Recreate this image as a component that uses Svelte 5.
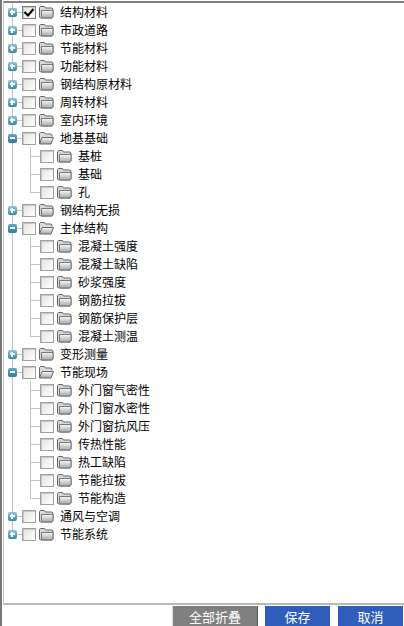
<script>
  const tree = [
    { label: "结构材料", checked: true },
    { label: "市政道路" },
    { label: "节能材料" },
    { label: "功能材料" },
    { label: "钢结构原材料" },
    { label: "周转材料" },
    { label: "室内环境" },
    { label: "地基基础", children: ["基桩", "基础", "孔"] },
    { label: "钢结构无损" },
    {
      label: "主体结构",
      children: ["混凝土强度", "混凝土缺陷", "砂浆强度", "钢筋拉拔", "钢筋保护层", "混凝土测温"],
    },
    { label: "变形测量" },
    {
      label: "节能现场",
      children: ["外门窗气密性", "外门窗水密性", "外门窗抗风压", "传热性能", "热工缺陷", "节能拉拔", "节能构造"],
    },
    { label: "通风与空调" },
    { label: "节能系统" },
  ]
</script>

{#snippet folder(open)}
  <svg class="folder" width="15" height="13" viewBox="0 0 15 13">
    <defs>
      <linearGradient id="fg" x1="0" y1="0" x2="0" y2="1">
        <stop offset="0" stop-color="#fbfbfb" />
        <stop offset="1" stop-color="#a4a4a4" />
      </linearGradient>
    </defs>
    {#if open}
      <path d="M0.500 11.500V1.500l1-1h4l1 1.500h5.500l1 1v1.500" fill="#dcdcdc" stroke="#666" />
      <path d="M0.500 12l2.500-6.500h11.500l-2.500 6.500z" fill="url(#fg)" stroke="#666" />
    {:else}
      <path d="M0.500 11V1.500l1-1h4l1 1.500h6.500l1 1V11l-1 1h-11.500z" fill="#d8d8d8" stroke="#666" />
      <path d="M2.500 4.500h11.500V11l-1 1H3l-.5-.5z" fill="url(#fg)" stroke="#777" />
    {/if}
  </svg>
{/snippet}

{#snippet row(label, checked, open)}
  <span class="box" class:checked>
    {#if checked}
      <svg width="14" height="13" viewBox="0 0 14 13">
        <path d="M2.500 6l3.500 3.500l5.500-6.500" fill="none" stroke="#000" stroke-width="2.200" />
      </svg>
    {/if}
  </span>
  {@render folder(open)}
  <span class="label">{label}</span>
{/snippet}

<div class="page">
  <div class="panel">
    <ul class="tree">
      {#each tree as node, i}
        <li class="node" class:last={i === tree.length - 1}>
          <div class="row">
            <span class="toggle" class:open={node.children}>
              <span class="bar"></span>
              {#if !node.children}<span class="bar vert"></span>{/if}
            </span>
            {@render row(node.label, node.checked, !!node.children)}
          </div>
          {#if node.children}
            <ul class="kids">
              {#each node.children as child}
                <li class="row child">
                  {@render row(child, false, false)}
                </li>
              {/each}
            </ul>
          {/if}
        </li>
      {/each}
    </ul>
  </div>
  <div class="actions">
    <button class="btn grey">全部折叠</button>
    <button class="btn blue">保存</button>
    <button class="btn blue">取消</button>
  </div>
</div>

<style>
  :global(body) {
    margin: 0;
    background: #fff;
  }

  .page {
    width: 404px;
    height: 626px;
    display: flex;
    flex-direction: column;
    overflow: hidden;
    border-left: 2px solid #777;
    box-sizing: border-box;
    font-family: "Noto Sans CJK SC", "Liberation Sans", sans-serif;
    font-size: 12px;
    color: #000;
  }

  .panel {
    height: 604px;
    box-sizing: border-box;
    margin-top: 1px;
    margin-left: 1px;
    border-top: 2px solid #808080;
    border-left: 1px solid #c8c8c8;
    border-bottom: 2px solid #b8b8b8;
    flex: none;
  }

  .tree,
  .kids {
    list-style: none;
    margin: 0;
    padding: 0;
  }

  .node {
    position: relative;
  }

  .node::before {
    content: "";
    position: absolute;
    left: 8px;
    top: 0;
    bottom: 0;
    border-left: 1px solid #c4c4c4;
  }

  .node.last::before {
    bottom: 9px;
  }

  .row {
    height: 18px;
    display: flex;
    align-items: center;
    position: relative;
  }

  .row::before {
    content: "";
    position: absolute;
    left: 8px;
    width: 11px;
    top: 9px;
    border-top: 1px solid #c4c4c4;
  }

  .kids {
    position: relative;
  }

  .kids::before {
    content: "";
    position: absolute;
    left: 26px;
    top: 0;
    bottom: 9px;
    border-left: 1px solid #c4c4c4;
  }

  .row.child::before {
    left: 26px;
  }

  .toggle {
    position: relative;
    width: 9px;
    height: 9px;
    margin: 1px 5px 0 4px;
    border-radius: 2px;
    background: linear-gradient(#8cc4dc, #3a86a8);
    flex: none;
  }

  .toggle.open {
    background: linear-gradient(#62a8c6, #2f7a9c);
  }

  .bar {
    position: absolute;
    left: 2px;
    top: 3px;
    width: 5px;
    height: 2px;
    background: #fff;
  }

  .bar.vert {
    left: 3px;
    top: 2px;
    width: 2px;
    height: 5px;
  }

  .child {
    padding-left: 36px;
  }

  .box {
    position: relative;
    width: 14px;
    height: 13px;
    margin-top: 1px;
    box-sizing: border-box;
    border: 1px solid #a0a0a0;
    box-shadow: inset 1px 1px 0 #c8c8c8;
    background: linear-gradient(135deg, #e2e2e2, #fff);
    flex: none;
  }

  .box.checked {
    border-color: #7c7c7c;
  }

  .box svg {
    position: absolute;
    left: -1px;
    top: -1px;
  }

  .folder {
    margin: 1px 0 0 3px;
    flex: none;
  }

  .label {
    margin-left: 6px;
    line-height: 18px;
  }

  .actions {
    flex: 1;
    display: flex;
    justify-content: flex-end;
    align-items: flex-start;
    gap: 8px;
    padding-top: 1px;
    padding-right: 1px;
  }

  .btn {
    height: 20px;
    border: 0;
    padding: 0;
    font: inherit;
    font-size: 13px;
    color: #fff;
  }

  .grey {
    width: 84px;
    background: #808080;
    box-shadow: 1px 0 0 #555, -1px 0 0 #ddd;
  }

  .blue {
    width: 65px;
    background: #2f5dbb;
  }
</style>
